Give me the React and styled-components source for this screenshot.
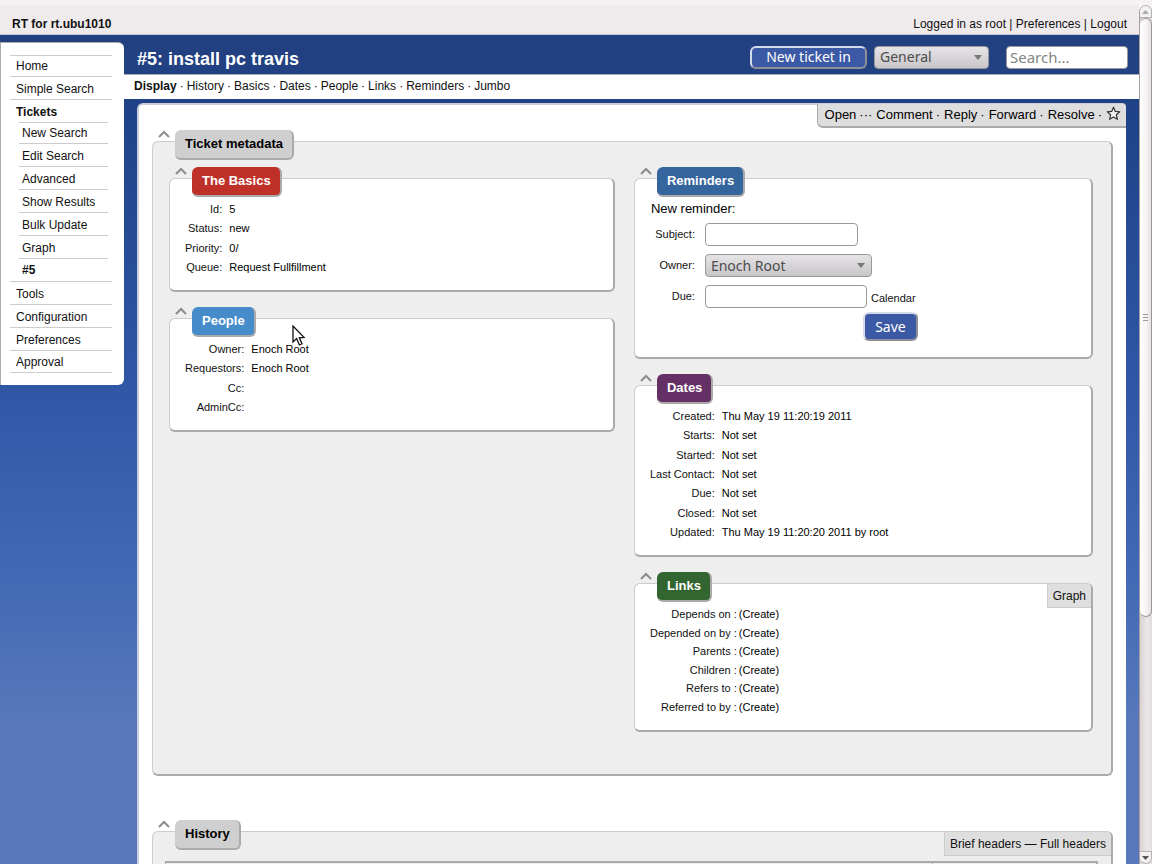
import { useState } from 'react';
import styled, { createGlobalStyle } from 'styled-components';

const menu = [
  { name: 'Home' },
  { name: 'Simple Search' },
  {
    name: 'Tickets',
    active: true,
    items: [
      { name: 'New Search' },
      { name: 'Edit Search' },
      { name: 'Advanced' },
      { name: 'Show Results' },
      { name: 'Bulk Update' },
      { name: 'Graph' },
      { name: '#5', active: true },
    ],
  },
  { name: 'Tools' },
  { name: 'Configuration' },
  { name: 'Preferences' },
  { name: 'Approval' },
];
const tabs = ['Display', 'History', 'Basics', 'Dates', 'People', 'Links', 'Reminders', 'Jumbo'];
const basics = [['Id:', '5'], ['Status:', 'new'], ['Priority:', '0/'], ['Queue:', 'Request Fullfillment']];
const people = [['Owner:', 'Enoch Root'], ['Requestors:', 'Enoch Root'], ['Cc:', ''], ['AdminCc:', '']];
const dates = [
  ['Created:', 'Thu May 19 11:20:19 2011'],
  ['Starts:', 'Not set'],
  ['Started:', 'Not set'],
  ['Last Contact:', 'Not set'],
  ['Due:', 'Not set'],
  ['Closed:', 'Not set'],
  ['Updated:', 'Thu May 19 11:20:20 2011 by root'],
];
const links = ['Depends on', 'Depended on by', 'Parents', 'Children', 'Refers to', 'Referred to by'];

function Caret() {
  return (
    <Toggle type="button" aria-label="Collapse">
      <svg width="12" height="8" viewBox="0 0 12 8"><path d="M1 7 L6 2 L11 7" fill="none" stroke="#8c8c8c" strokeWidth="2" /></svg>
    </Toggle>
  );
}

function Box({ title, color, inner, corner, children }) {
  return (
    <Panel $inner={inner}>
      <PanelTop>
        <Caret />
        <PanelTitle $color={color}>{title}</PanelTitle>
        {corner && <Corner>{corner}</Corner>}
      </PanelTop>
      {children}
    </Panel>
  );
}

function Fields({ rows }) {
  return (
    <FieldTable>
      <tbody>
        {rows.map(([label, value]) => (
          <tr key={label}><th scope="row">{label}</th><td>{value}</td></tr>
        ))}
      </tbody>
    </FieldTable>
  );
}

function Reminder() {
  const [body, setBody] = useState({ subject: '', due: '' });
  return (
    <ReminderForm onSubmit={e => e.preventDefault()}>
      <h3>New reminder:</h3>
      <FormRow>
        <label htmlFor="subject">Subject:</label>
        <TextInput id="subject" $width="153px" value={body.subject} onChange={e => setBody({ ...body, subject: e.target.value })} />
      </FormRow>
      <FormRow>
        <label htmlFor="owner">Owner:</label>
        <Select id="owner" $width="167px"><option>Enoch Root</option></Select>
      </FormRow>
      <FormRow>
        <label htmlFor="due">Due:</label>
        <TextInput id="due" $width="162px" value={body.due} onChange={e => setBody({ ...body, due: e.target.value })} />
        <a href="#calendar">Calendar</a>
      </FormRow>
      <SaveButton type="submit">Save</SaveButton>
    </ReminderForm>
  );
}

export default function App() {
  return (
    <Window>
      <Global />
      <Strip />
      <Page>
        <Top>
          <strong>RT for rt.ubu1010</strong>
          <div>Logged in as root | <a href="#prefs">Preferences</a> | <a href="#logout">Logout</a></div>
        </Top>
        <Body>
          <Sidebar>
            <Menu>
              {menu.map(m => (
                <li key={m.name}>
                  <MenuLink href="#menu" $active={m.active} $open={m.items}>{m.name}</MenuLink>
                  {m.items && (
                    <SubMenu>
                      {m.items.map(s => (
                        <li key={s.name}><SubLink href="#menu" $active={s.active}>{s.name}</SubLink></li>
                      ))}
                    </SubMenu>
                  )}
                </li>
              ))}
            </Menu>
          </Sidebar>
          <Main>
            <TitleBar>
              <h1>#5: install pc travis</h1>
              <NewTicket type="button">New ticket in</NewTicket>
              <Select $width="115px" aria-label="Queue"><option>General</option></Select>
              <Search type="text" placeholder="Search..." aria-label="Search" />
            </TitleBar>
            <Tabs>
              {tabs.map((t, i) => (
                <span key={t}>{i > 0 && <i>·</i>}<TabLink href="#tab" $active={i === 0}>{t}</TabLink></span>
              ))}
            </Tabs>
            <Content>
              <Actions>
                <a href="#open">Open</a><i>···</i><a href="#comment">Comment</a><i>·</i><a href="#reply">Reply</a><i>·</i>
                <a href="#forward">Forward</a><i>·</i><a href="#resolve">Resolve</a><i>·</i>
                <Star type="button" aria-label="Bookmark">
                  <svg width="15" height="15" viewBox="0 0 15 15"><path d="M7.5 1.2 L9.3 5.4 L13.8 5.8 L10.4 8.8 L11.4 13.3 L7.5 11 L3.6 13.3 L4.6 8.8 L1.2 5.8 L5.7 5.4 Z" fill="#f0f0f0" stroke="#333" strokeWidth="1.2" strokeLinejoin="round" /></svg>
                </Star>
              </Actions>
              <Box title="Ticket metadata">
                <Columns>
                  <Column>
                    <Box inner title="The Basics" color="#bf3029"><Fields rows={basics} /></Box>
                    <Box inner title="People" color="#468bca"><Fields rows={people} /></Box>
                  </Column>
                  <Column>
                    <Box inner title="Reminders" color="#34659d"><Reminder /></Box>
                    <Box inner title="Dates" color="#643065"><Fields rows={dates} /></Box>
                    <Box inner title="Links" color="#32652f" corner={<a href="#graph">Graph</a>}>
                      <LinkTable>
                        <tbody>
                          {links.map(l => (
                            <tr key={l}><th scope="row">{l} :</th><td>(<a href="#create">Create</a>)</td></tr>
                          ))}
                        </tbody>
                      </LinkTable>
                    </Box>
                  </Column>
                </Columns>
              </Box>
              <Box title="History" corner={<><a href="#brief">Brief headers</a> — <a href="#full">Full headers</a></>}>
                <Transaction><span /><span /></Transaction>
              </Box>
            </Content>
          </Main>
        </Body>
      </Page>
      <Scrollbar>
        <ScrollArrow><svg width="7" height="4" viewBox="0 0 7 4"><path d="M0 4 L3.5 0 L7 4 Z" fill="#aaa" /></svg></ScrollArrow>
        <Thumb><i /><i /><i /></Thumb>
        <ScrollArrow $down><svg width="7" height="4" viewBox="0 0 7 4"><path d="M0 0 L3.5 4 L7 0 Z" fill="#555" /></svg></ScrollArrow>
      </Scrollbar>
      <Pointer width="13" height="21" viewBox="0 0 13 21">
        <path d="M1 1 V17 L4.6 13.6 L7.4 20 L10 18.8 L7.3 12.8 L12 12.4 Z" fill="#fff" stroke="#111" strokeWidth="1.3" />
      </Pointer>
    </Window>
  );
}

const Global = createGlobalStyle`
*{box-sizing:border-box}
body{margin:0;font-family:"Liberation Sans",Arial,sans-serif;font-size:12px;color:#111}
a{color:inherit;text-decoration:none}
ul{list-style:none;margin:0;padding:0}
h1,h2,h3{margin:0}
button{cursor:pointer}
`

const Window = styled.div`
position:relative;
display:grid;grid-template-columns:minmax(0,1fr) 13px;grid-template-rows:5px minmax(0,1fr);
height:100vh;overflow:hidden;
`

const Strip = styled.div`
grid-column:1 / -1;background-color:#f7f1f6;
`

const Page = styled.div`
display:flex;flex-direction:column;overflow:hidden;
background:linear-gradient(#23407f 30px,#1f4389 110px,#2f57a6 380px,#4068b4 560px,#5878bb 720px,#5878bb);
`

const Top = styled.header`
display:flex;justify-content:space-between;align-items:center;flex:none;
height:30px;padding:8px 12px 0 12px;
background-color:#efebed;border-bottom:1px solid #c3c9dc;
`

const Body = styled.div`
display:grid;grid-template-columns:124px minmax(0,1fr);align-items:start;
`

const Sidebar = styled.nav`
margin-top:7px;padding:12px 12px 12px 9px;
background-color:#fff;border:1px solid #aaa;border-right:0;border-bottom:0;border-radius:0 6px 6px 0;
`

const MenuLink = styled.a`
display:block;height:${p => p.$open ? '22px' : '23px'};line-height:21px;
padding:2px 0 0 6px;
border-bottom:${p => p.$open ? '0' : '1px solid #ccc'};
font-weight:${p => p.$active ? 'bold' : 'normal'};
`

const SubLink = styled(MenuLink)`
margin:0 4px 0 9px;padding-left:3px;
`

const Menu = styled.ul`
border-top:1px solid #ccc;
> li:first-child > a{height:21px;padding-top:0}
> li:last-child > a{height:22px;padding-top:1px}
`

const SubMenu = styled.ul`
border-bottom:1px solid #ccc;
li:first-child a{height:22px;padding-top:0;border-top:1px solid #ccc}
li:last-child a{height:22px;padding-top:1px;border-bottom:0}
`

const Main = styled.main`
display:flex;flex-direction:column;
`

const TitleBar = styled.div`
display:flex;align-items:center;
height:40px;padding:5px 11px 0 13px;border-bottom:1px solid #a9a9b4;
h1{flex:1;padding-top:3px;font-size:18px;line-height:22px;color:#fff;white-space:nowrap}
`

const Tabs = styled.nav`
height:24px;line-height:23px;padding-left:10px;background-color:#fff;white-space:nowrap;
i{margin:0 3px;font-style:normal}
`

const TabLink = styled.a`
font-weight:${p => p.$active ? 'bold' : 'normal'};
`

const Select = styled.select`
appearance:none;flex:none;
width:${p => p.$width};height:23px;padding:0 5px;
border:1px solid #999;border-radius:4px;
background:url("data:image/svg+xml,%3Csvg xmlns='http://www.w3.org/2000/svg' width='8' height='5'%3E%3Cpath d='M0 0h8L4 5z' fill='%23777'/%3E%3C/svg%3E") no-repeat right 6px center,
  linear-gradient(#e6e4e6,#c9c6c9);
color:#4c4c4c;font-family:"Noto Sans",sans-serif;font-size:14px;line-height:20px;
`

const TextInput = styled.input`
flex:none;width:${p => p.$width};height:23px;padding:0 4px;
border:1px solid #999;border-radius:4px;background-color:#fff;
font-family:"Noto Sans",sans-serif;font-size:14px;
`

const Search = styled(TextInput)`
width:122px;margin-left:17px;padding:0 3px;font-size:15px;
&::placeholder{color:#80877f;opacity:1}
`

const BlueButton = styled.button`
border:2px solid;border-color:#d5daea #8f9097 #8f9097 #d5daea;border-radius:6px;
background-color:#3c59a5;color:#fff;font-family:"Noto Sans",sans-serif;font-size:14px;
line-height:18px;
`

const NewTicket = styled(BlueButton)`
width:117px;height:23px;margin-right:7px;padding:0;white-space:nowrap;
`

const SaveButton = styled(BlueButton)`
display:block;width:55px;height:29px;margin:4px 0 0 212px;padding:0;
`

const Content = styled.section`
display:flex;flex-direction:column;
margin:4px 13px 0 13px;padding:0 13px 0 13px;
background-color:#fff;border:solid #c9cedb;border-width:2px 0 0 2px;border-radius:6px 4px 0 0;
`

const Actions = styled.nav`
display:flex;align-items:center;align-self:flex-end;
height:24px;margin:-1px -13px 13px 0;padding:0 5px 1px 7px;
background-color:#dedede;border:solid #aaa;border-width:0 0 2px 1px;border-radius:0 4px 0 6px;
font-size:13px;color:#000;
i{margin:0 4px 0 3px;font-style:normal}
`

const Star = styled.button`
display:flex;border:0;padding:0 0 3px;background:none;
`

const Panel = styled.section`
background-color:${p => p.$inner ? '#fff' : '#eee'};
border:solid #aaa;border-width:1px 2px 2px 1px;
border-top-color:#ccc;border-left-color:#ccc;border-radius:6px;
padding-bottom:13px;
margin-bottom:${p => p.$inner ? '0' : '55px'};
`

const PanelTop = styled.div`
display:flex;align-items:flex-start;height:17px;
> button, > h2{margin-top:-12px}
`

const Toggle = styled.button`
display:flex;flex:none;width:22px;border:0;padding:0 0 0 5px;background:none;
`

const PanelTitle = styled.h2`
height:30px;padding:0 9px 0 10px;
background-color:${p => p.$color || '#cfcfcf'};color:${p => p.$color ? '#fff' : '#000'};
border:solid #aaa;border-width:0 2px 2px 0;border-radius:6px;
font-size:13px;line-height:28px;white-space:nowrap;
`

const Corner = styled.div`
margin-left:auto;flex:none;height:24px;padding:0 5px;line-height:25px;
background-color:#dedede;border:solid #ccc;border-width:0 0 1px 1px;border-radius:0 4px 0 0;
white-space:nowrap;
`

const Columns = styled.div`
display:grid;grid-template-columns:minmax(0,34fr) minmax(0,35fr);gap:19px;align-items:start;
padding:19px 18px 29px 16px;
`

const Column = styled.div`
display:flex;flex-direction:column;gap:26px;
`

const Table = styled.table`
border-collapse:collapse;margin:4px 0 0 15px;font-size:11px;
th,td{padding:0;white-space:nowrap}
th{font-weight:normal;text-align:right}
td{color:#000}
`

const FieldTable = styled(Table)`
line-height:19px;
td{height:19px;padding-left:7px}
tr:nth-child(3n) td{height:20px}
`

const LinkTable = styled(Table)`
line-height:18px;margin-bottom:1px;
td{height:18px;padding-left:2px}
tr:nth-child(2n) td{height:19px}
`

const ReminderForm = styled.form`
padding:4px 0 3px 16px;
h3{font-size:13px;font-weight:normal;line-height:18px;color:#000;margin-bottom:5px}
`

const FormRow = styled.div`
display:flex;align-items:center;margin-bottom:8px;font-size:11px;
label{width:44px;margin-right:10px;padding-bottom:2px;text-align:right}
a{margin-left:4px;padding-top:3px}
&:nth-of-type(3){margin-bottom:0}
`

const Transaction = styled.div`
display:grid;grid-template-columns:minmax(0,1fr) 163px;gap:1px;
height:80px;margin:12px 13px 0 12px;
border:solid #aaa;border-width:2px 2px 0 1px;background-color:#aaa;
span{background-color:#eee}
`

const Scrollbar = styled.aside`
display:grid;grid-template-rows:13px 599px minmax(0,1fr) 13px;
border-left:1px solid #a79f9f;border-radius:7px 7px 0 0;
background:linear-gradient(90deg,#d9d3d3,#ebe6e7 60%,#e2dddd);
`

const ScrollArrow = styled.div`
grid-row:${p => p.$down ? 4 : 1};
display:flex;align-items:center;justify-content:center;
border:1px solid #b5b0b0;border-left:0;border-radius:${p => p.$down ? '0 0 6px 6px' : '6px 6px 0 0'};
background-color:#f3f0f1;
`

const Thumb = styled.div`
grid-row:2;display:flex;flex-direction:column;align-items:center;justify-content:center;gap:2px;
border:1px solid #9a9696;border-left:0;border-radius:6px;
background:linear-gradient(90deg,#fff,#f4f2f2 60%,#e4e0e0);
i{width:5px;height:1px;background-color:#999}
`

/* mouse pointer floats over the page */
const Pointer = styled.svg`
position:absolute;left:292px;top:325px;pointer-events:none;
`
